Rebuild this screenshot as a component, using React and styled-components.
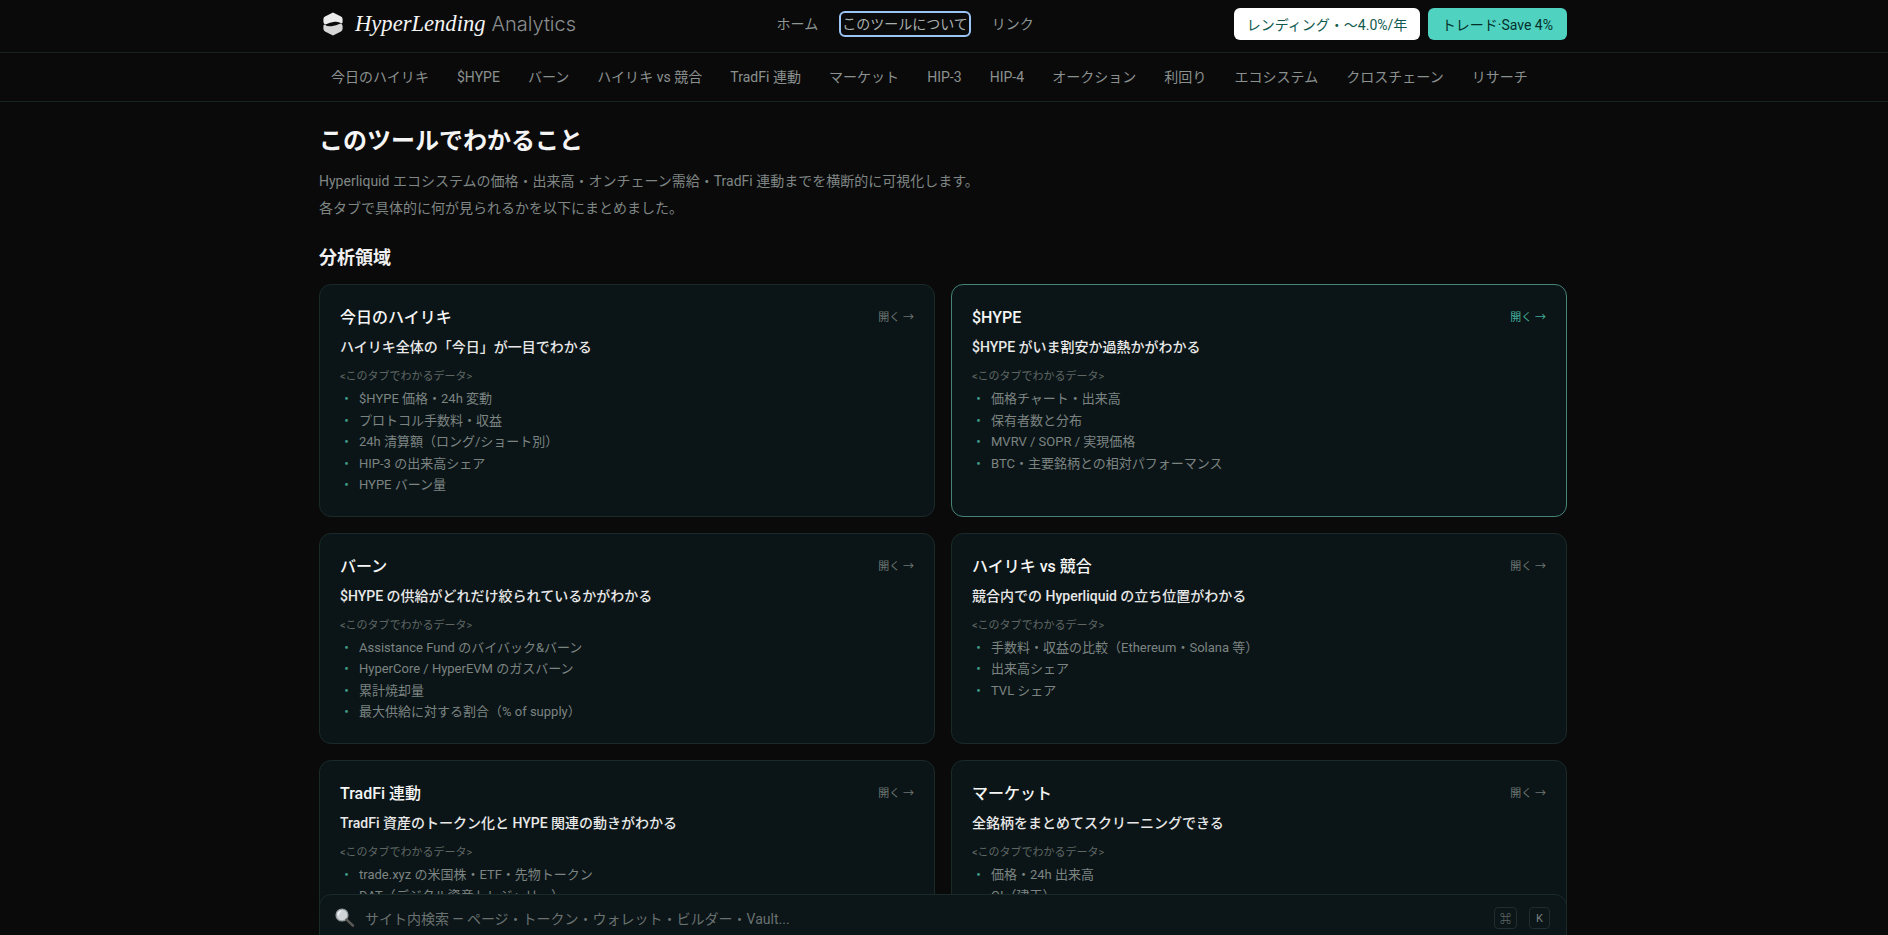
import React from "react";
import styled, { createGlobalStyle } from "styled-components";

const sans = `Roboto, "Noto Sans CJK JP", "Noto Sans", sans-serif`;

const topLinks = ["ホーム", "このツールについて", "リンク"];
const tabs = ["今日のハイリキ", "$HYPE", "バーン", "ハイリキ vs 競合", "TradFi 連動", "マーケット", "HIP-3", "HIP-4", "オークション", "利回り", "エコシステム", "クロスチェーン", "リサーチ"];

const cards = [
    {
        title: "今日のハイリキ",
        lead: "ハイリキ全体の「今日」が一目でわかる",
        items: ["$HYPE 価格・24h 変動", "プロトコル手数料・収益", "24h 清算額（ロング/ショート別）", "HIP-3 の出来高シェア", "HYPE バーン量"],
    },
    {
        title: "$HYPE",
        lead: "$HYPE がいま割安か過熱かがわかる",
        items: ["価格チャート・出来高", "保有者数と分布", "MVRV / SOPR / 実現価格", "BTC・主要銘柄との相対パフォーマンス"],
        active: true,
    },
    {
        title: "バーン",
        lead: "$HYPE の供給がどれだけ絞られているかがわかる",
        items: ["Assistance Fund のバイバック&バーン", "HyperCore / HyperEVM のガスバーン", "累計焼却量", "最大供給に対する割合（% of supply）"],
    },
    {
        title: "ハイリキ vs 競合",
        lead: "競合内での Hyperliquid の立ち位置がわかる",
        items: ["手数料・収益の比較（Ethereum・Solana 等）", "出来高シェア", "TVL シェア"],
    },
    {
        title: "TradFi 連動",
        lead: "TradFi 資産のトークン化と HYPE 関連の動きがわかる",
        items: ["trade.xyz の米国株・ETF・先物トークン", "DAT（デジタル資産トレジャリー）"],
    },
    {
        title: "マーケット",
        lead: "全銘柄をまとめてスクリーニングできる",
        items: ["価格・24h 出来高", "OI（建玉）"],
    },
];

export default function App() {
    return (
        <>
            <GlobalStyle />
            <Header>
                <HeaderInner>
                    <Brand>
                        <Logo viewBox="0 0 20 24" aria-hidden="true">
                            <path d="M10 0.5 L18 4.6 Q19.6 5.5 19.6 7.2 L19.6 10 Q19.6 11.2 18.6 11.6 Q15.5 9.2 11.5 9.8 Q7 10.4 2.4 12.4 Q0.4 11.8 0.4 10 L0.4 7.2 Q0.4 5.5 2 4.6 Z" fill="#ececec" />
                            <path d="M10 23.5 L2 19.4 Q0.4 18.5 0.4 16.8 L0.4 14 Q0.4 12.8 1.4 12.4 Q4.5 14.8 8.5 14.2 Q13 13.6 17.6 11.6 Q19.6 12.2 19.6 14 L19.6 16.8 Q19.6 18.5 18 19.4 Z" fill="#d6d6d6" />
                        </Logo>
                        <BrandName>HyperLending</BrandName>
                        <BrandSuffix>Analytics</BrandSuffix>
                    </Brand>
                    <TopNav>
                        {topLinks.map((link, i) => (
                            <TopLink key={link} $focused={i === 1}>{link}</TopLink>
                        ))}
                    </TopNav>
                    <Actions>
                        <ActionButton>レンディング・〜4.0%/年</ActionButton>
                        <ActionButton $primary>トレード·Save 4%</ActionButton>
                    </Actions>
                </HeaderInner>
            </Header>
            <TabBar>
                <TabRow>
                    {tabs.map((tab) => (
                        <Tab key={tab}>{tab}</Tab>
                    ))}
                </TabRow>
            </TabBar>
            <Main>
                <PageTitle>このツールでわかること</PageTitle>
                <Intro>
                    Hyperliquid エコシステムの価格・出来高・オンチェーン需給・TradFi 連動までを横断的に可視化します。
                    <br />
                    各タブで具体的に何が見られるかを以下にまとめました。
                </Intro>
                <SectionTitle>分析領域</SectionTitle>
                <CardGrid>
                    {cards.map((card) => (
                        <Card key={card.title} $active={card.active}>
                            <CardHead>
                                <CardTitle>{card.title}</CardTitle>
                                <OpenLink $active={card.active}>開く →</OpenLink>
                            </CardHead>
                            <CardLead>{card.lead}</CardLead>
                            <DataLabel>&lt;このタブでわかるデータ&gt;</DataLabel>
                            <DataList>
                                {card.items.map((item) => (
                                    <DataItem key={item}>{item}</DataItem>
                                ))}
                            </DataList>
                        </Card>
                    ))}
                </CardGrid>
            </Main>
            <SearchBar>
                <SearchIcon viewBox="0 0 20 20" aria-hidden="true">
                    <circle cx="7" cy="7" r="6" fill="#cfd4d6" stroke="#8f989c" strokeWidth="1.2" />
                    <path d="M5.4 3.4 A4.4 4.4 0 0 0 3.2 6.6" fill="none" stroke="#f4f6f7" strokeWidth="1.4" strokeLinecap="round" />
                    <path d="M11.6 11.6 L18 17.6" stroke="#5c5a55" strokeWidth="2.6" strokeLinecap="round" />
                </SearchIcon>
                <SearchText>サイト内検索 — ページ・トークン・ウォレット・ビルダー・Vault...</SearchText>
                <Keys>
                    <Key>⌘</Key>
                    <Key>K</Key>
                </Keys>
            </SearchBar>
        </>
    );
}

// GLOBAL *******************************************************

const GlobalStyle = createGlobalStyle`
    html, body {
        margin: 0;
        height: 100%;
        overflow: hidden;
        background: #0a0a0b;
    }
    body {
        font-family: ${sans};
        color: #fff;
    }
    * {
        box-sizing: border-box;
    }
`;

// HEADER *******************************************************

const Header = styled.header`
    height: 53px;
    border-bottom: 1px solid #16231f;
`;

const HeaderInner = styled.div`
    width: 1248px;
    margin-left: 319px;
    padding-top: 8px;
    display: flex;
    justify-content: space-between;
    align-items: center;
`;

const Brand = styled.div`
    display: flex;
    align-items: center;
`;

const Logo = styled.svg`
    width: 20px;
    height: 24px;
    margin-left: 4px;
    margin-right: 12px;
`;

const BrandName = styled.span`
    font-family: "Liberation Serif", serif;
    font-style: italic;
    font-size: 22.6px;
    color: #f4f4f4;
    margin-right: 6px;
`;

const BrandSuffix = styled.span`
    font-family: Inter, sans-serif;
    font-size: 20px;
    font-weight: 300;
    color: #8b8f8e;
`;

const TopNav = styled.nav`
    display: flex;
    gap: 24px;
`;

const TopLink = styled.a`
    font-size: 14px;
    line-height: 20px;
    color: ${(p) => (p.$focused ? "#a9afad" : "#8f9694")};
    border-radius: 3px;
    ${(p) => p.$focused && "outline: 2px solid #9cc3f5; outline-offset: 1px;"}
`;

const Actions = styled.div`
    display: flex;
    gap: 8px;
`;

const ActionButton = styled.button`
    height: 32px;
    padding: 0 ${(p) => (p.$primary ? "14px" : "12.5px")};
    border: 0;
    border-radius: 6px;
    font-family: ${sans};
    font-size: 14px;
    font-weight: 400;
    background: ${(p) => (p.$primary ? "#50d2c1" : "#ffffff")};
    color: ${(p) => (p.$primary ? "#04302a" : "#0f5a4e")};
`;

// TABS *******************************************************

const TabBar = styled.div`
    height: 49px;
    border-bottom: 1px solid #16231f;
`;

const TabRow = styled.nav`
    width: 1248px;
    height: 48px;
    margin-left: 319px;
    display: flex;
    align-items: center;
    gap: 4px;
`;

const Tab = styled.a`
    padding: 0 12px;
    font-size: 14px;
    line-height: 20px;
    letter-spacing: 0.002em;
    color: #8a918f;
`;

// CONTENT *******************************************************

const Main = styled.main`
    width: 1248px;
    margin-left: 319px;
    padding-top: 23px;
`;

const PageTitle = styled.h1`
    margin: 0;
    font-size: 24px;
    line-height: 32px;
    font-weight: 600;
    color: #f5f5f5;
`;

const Intro = styled.p`
    margin: 11px 0 0;
    font-size: 14px;
    line-height: 27px;
    color: #7f8684;
`;

const SectionTitle = styled.h2`
    margin: 22px 0 0;
    font-size: 18px;
    line-height: 28px;
    font-weight: 600;
    color: #f0f0f0;
`;

const CardGrid = styled.div`
    margin-top: 12px;
    display: grid;
    grid-template-columns: 1fr 1fr;
    gap: 16px;
`;

const Card = styled.article`
    padding: 21px 20px 19.6px;
    background: #0b1517;
    border: 1px solid ${(p) => (p.$active ? "#458476" : "#1a2a29")};
    border-radius: 12px;
`;

const CardHead = styled.div`
    display: flex;
    justify-content: space-between;
    align-items: center;
`;

const CardTitle = styled.h3`
    margin: 0;
    font-size: 16px;
    line-height: 24px;
    font-weight: 500;
    color: #f5f5f5;
`;

const OpenLink = styled.span`
    font-size: 11px;
    line-height: 16px;
    color: ${(p) => (p.$active ? "#44ad9a" : "#6e7573")};
`;

const CardLead = styled.p`
    margin: 7px 0 0;
    font-size: 14px;
    line-height: 20px;
    font-weight: 500;
    color: #e8e8e8;
`;

const DataLabel = styled.div`
    margin-top: 12px;
    font-size: 11px;
    line-height: 16px;
    color: #5f6765;
`;

const DataList = styled.ul`
    margin: 3px 0 0;
    padding: 0;
    list-style: none;
`;

const DataItem = styled.li`
    display: flex;
    font-size: 13px;
    line-height: 21.6px;
    color: #7c8482;
    &::before {
        content: "・";
        width: 13px;
        margin-right: 6px;
        color: #3f9c8a;
    }
`;

// SEARCH *******************************************************

const SearchBar = styled.div`
    position: fixed;
    left: 319px;
    bottom: -7px;
    width: 1248px;
    height: 48px;
    padding: 0 16px 0 15px;
    display: flex;
    align-items: center;
    background: #0c1518;
    border: 1px solid #1a2a29;
    border-radius: 12px 12px 0 0;
`;

const SearchIcon = styled.svg`
    width: 20px;
    height: 20px;
    margin-right: 10px;
`;

const SearchText = styled.span`
    flex: 1;
    font-size: 14px;
    color: #697270;
`;

const Keys = styled.div`
    display: flex;
    gap: 12px;
`;

const Key = styled.kbd`
    min-width: 21px;
    height: 22px;
    padding: 0 5px;
    display: flex;
    align-items: center;
    justify-content: center;
    font-family: ${sans};
    font-size: 11px;
    color: #79817f;
    border: 1px solid #1f2e2d;
    border-radius: 4px;
`;
